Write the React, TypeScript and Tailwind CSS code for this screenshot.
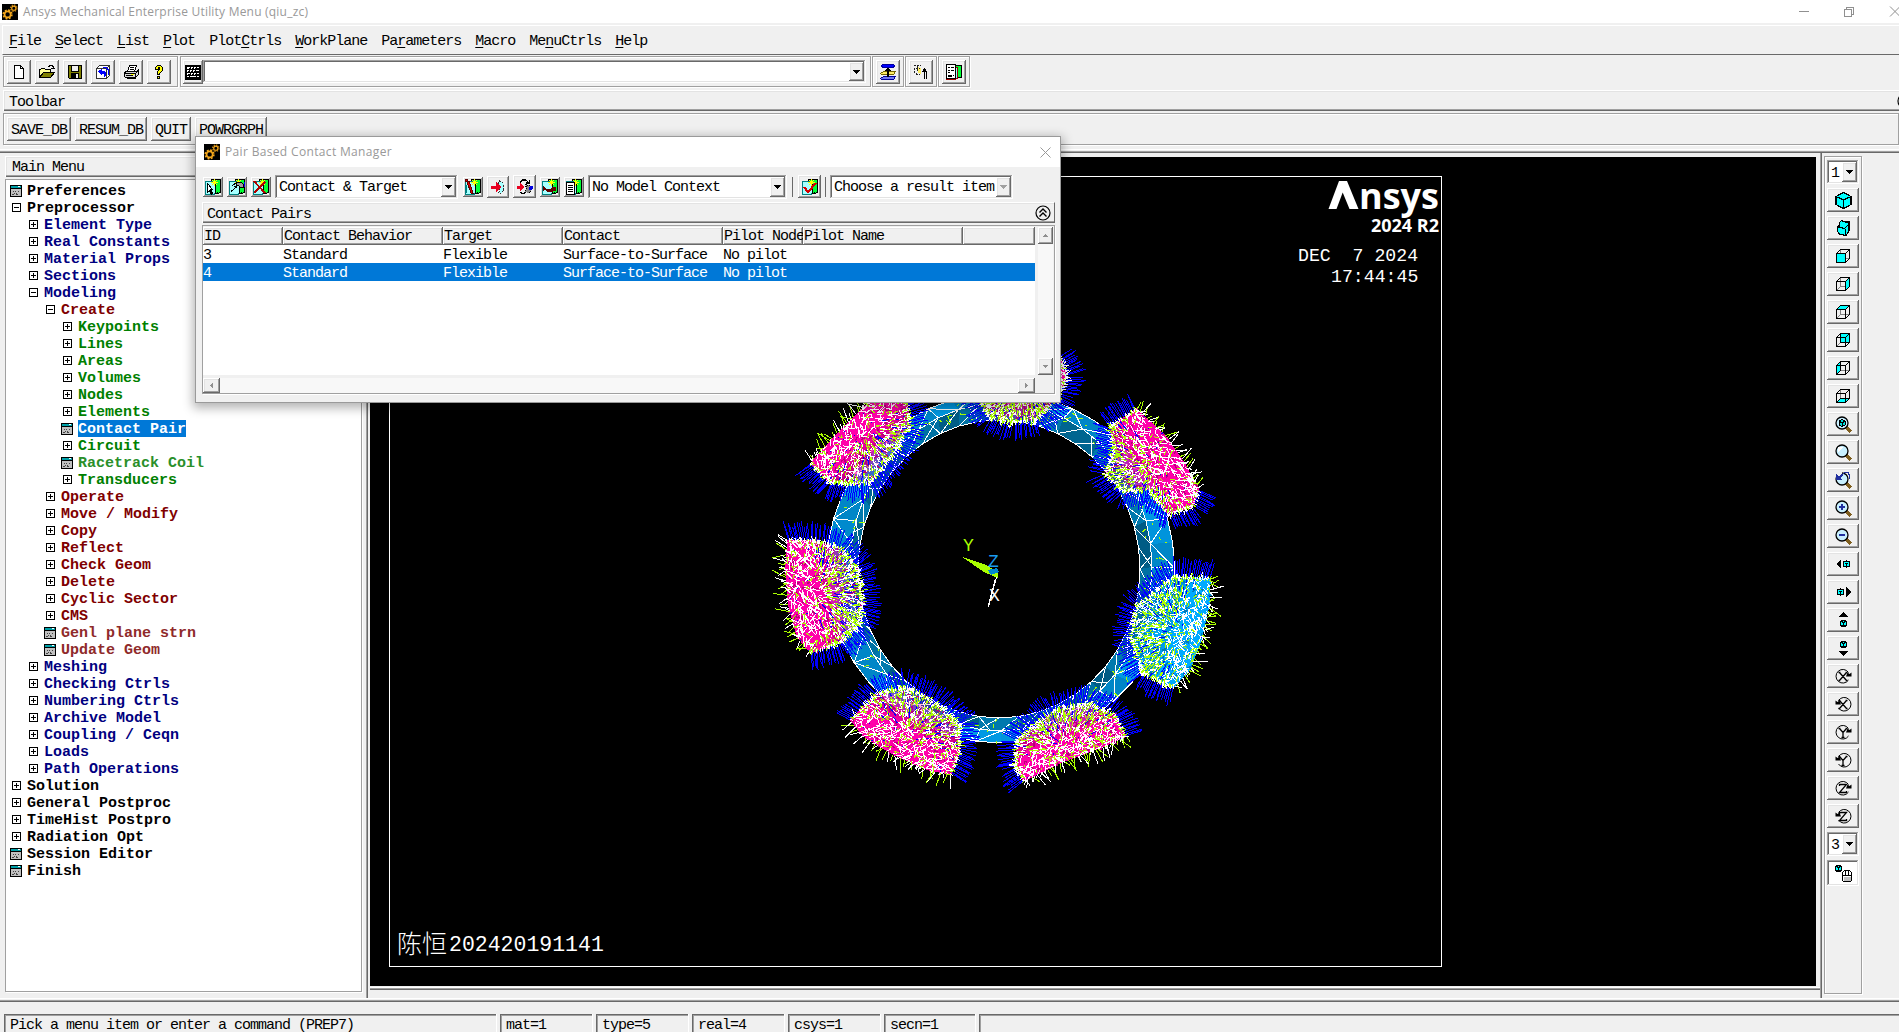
import React from "react";

const RAISED =
  "bg-[#f0f0f0] shadow-[inset_-1px_-1px_#696969,inset_1px_1px_#ffffff,inset_-2px_-2px_#a0a0a0,inset_2px_2px_#e3e3e3]";
const SUNKEN =
  "bg-white shadow-[inset_-1px_-1px_#ffffff,inset_1px_1px_#a0a0a0,inset_-2px_-2px_#e3e3e3,inset_2px_2px_#696969]";
const GROUP = "border border-[#a0a0a0] shadow-[1px_1px_#ffffff,inset_1px_1px_#ffffff]";
const BAR = "border-t border-l border-white shadow-[inset_0_-1px_#696969,inset_0_-2px_#a0a0a0,inset_1px_1px_#e3e3e3]";
const MONO =
  "block font-['Liberation_Mono','Noto_Sans_CJK_SC',monospace] text-[15px] tracking-[-1px] whitespace-pre leading-[18px]";

/* ---------- icons ---------- */

function Gears() {
  return (
    <svg width="16" height="16" viewBox="0 0 16 16" className="shrink-0">
      <rect width="16" height="16" fill="#000" />
      <circle cx="5.6" cy="10.4" r="4.3" fill="none" stroke="#f5a81c" strokeWidth="1.6" strokeDasharray="1.9 1.48" />
      <circle cx="5.6" cy="10.4" r="3" fill="none" stroke="#f5a81c" strokeWidth="1.6" />
      <circle cx="11.8" cy="4.2" r="3.2" fill="none" stroke="#b87d14" strokeWidth="1.3" strokeDasharray="1.4 1.1" />
      <circle cx="11.8" cy="4.2" r="2.1" fill="none" stroke="#f5a81c" strokeWidth="1.1" />
    </svg>
  );
}

function Ico({ children, size = 16 }: { children: React.ReactNode; size?: number }) {
  return (
    <svg width={size} height={size} viewBox={`0 0 ${size} ${size}`} shapeRendering="crispEdges" className="shrink-0" fill="none" stroke="#000">
      {children}
    </svg>
  );
}

const NewIcon = () => (
  <Ico>
    <path d="M3.5 1.5h6l3 3v10h-9z" fill="#fff" />
    <path d="M9.5 1.5v3h3" />
  </Ico>
);
const OpenIcon = () => (
  <Ico>
    <path d="M.5 13.5v-8h1l1-1h3l1 1h5v3" fill="#ffff99" />
    <path d="M.5 13.5l4-5h11l-4 5z" fill="#808000" />
    <path d="M9 2.5h1l1-1h2l1 1v2M12 4.5h4M13.5 5v-1" />
  </Ico>
);
const SaveIcon = () => (
  <Ico>
    <path d="M1.5 1.5h13v13h-12l-1-1z" fill="#808000" />
    <rect x="4.5" y="1.5" width="7" height="6" fill="#f0f0f0" />
    <rect x="4" y="9" width="8" height="5" fill="#000" stroke="none" />
    <rect x="9" y="10" width="2" height="4" fill="#f0f0f0" stroke="none" />
  </Ico>
);
const ResumeIcon = () => (
  <Ico>
    <path d="M1.5 4.5l3-3h10v10l-3 3h-10zM1.5 4.5h10v10M11.5 4.5l3-3" fill="#fff" stroke="#333" />
    <path d="M3 7.500l4-3v2h2.500l1.500 2v3l-2 2c.5-3 0-4-2-4v2z" fill="#0000ff" stroke="none" />
    <path d="M8 3.500h3l2 2v5" stroke="#00f" />
  </Ico>
);
const PrintIcon = () => (
  <Ico>
    <path d="M4.5 7.5l2-6h7l-2 6z" fill="#fff" />
    <path d="M7 3.5h4M6.5 5.5h4" />
    <path d="M1.5 8.5l2-1h10l2-2v5l-3 3h-10l-1-1z" fill="#d8d8d8" />
    <path d="M1.5 9.5h11l2-2M12.5 9v5M3 11.5h7" />
    <path d="M7.5 10.5h3" stroke="#ffff00" />
    <path d="M3.5 14.5h9" />
  </Ico>
);
const HelpIcon = () => (
  <Ico>
    <path d="M4.5 5.5v-2l2-2h3l2 2v3l-3 3v1h-2v-3l2-2v-2h-1v2z" fill="#ffff00" />
    <path d="M6.5 12.5h2v2h-2z" fill="#ffff00" />
  </Ico>
);
const KeyboardIcon = () => (
  <Ico>
    <rect x="0" y="1" width="16" height="15" fill="#000" stroke="none" />
    <path
      d="M2 3.500h3M6 3.500h2M9 3.500h2M12 3.500h2M2 6.500h2M5 6.500h2M8 6.500h2M11 6.500h3M2 9.500h3M6 9.500h2M9 9.500h2M12 9.500h2M2 12.500h2M5 12.500h6M12 12.500h2M2 4.500h2M6 4.500h1M9 4.500h1M2 7.500h1M5 7.500h1M8 7.500h1M2 10.500h1M6 10.500h1M9 10.500h1"
      stroke="#fff"
    />
  </Ico>
);
const RaiseIcon = () => (
  <Ico>
    <path d="M1.5 1.5l1-1h11l1 1-1 2h-11z" fill="#0000ff" stroke="#00009c" />
    <path d="M.5 9.5l3-2h12l-2 3h-12z" fill="#ffee66" stroke="#776600" />
    <path d="M.5 14.5l3-2h12l-2 3h-12z" fill="#6f78f0" stroke="#00009c" />
    <path d="M8 3l3 4h-2v6h-2v-6h-2z" fill="#000" stroke="none" />
  </Ico>
);
const PickIcon = () => (
  <Ico>
    <path d="M4 3l4 1v6l-3-1z" fill="#ffee66" stroke="none" />
    <path d="M1 1.500h7M4.500 2v2M1.500 4v4l2 2h3M3 4.500h4M4.500 5v2" stroke="#222" strokeDasharray="2 1" />
    <path d="M9 8l2.500-3L14 8M11.500 5v10M13.500 8v7M10 7.500h4" />
  </Ico>
);
const ContactIcon = () => (
  <Ico>
    <rect x="7.5" y="1.5" width="8" height="12" fill="#00ff33" />
    <path d="M7.5 3.5h4v11l-4 1h-7v-13h7z" fill="#9ff" stroke="#a00000" />
    <rect x=".5" y=".5" width="9" height="14" fill="#fff" />
    <path d="M2 3.5h2M5 3.5h3M2 6.5h2M5 6.5h3M2 8.5h2M2 11.5h4M2 12.5h4M7 11.5h1" />
  </Ico>
);

function PairIcon({ kind }: { kind: string }) {
  return (
    <Ico>
      <path d="M6.500 .5h9v12l-2 2h-3z" fill="#00ff33" />
      <path d="M.5 2.500h8l2 1v11l-2 1h-8z" fill="#a6ffff" stroke="#008080" />
      <path d="M10.500 4v11M12.500 13v2M15.500 1v13" />
      <path d="M9.500 0v7M6 3.500h7M7 1l5 5M12 1l-5 5" stroke="#ffff00" />
      {kind === "new" && <path d="M2.500 4.500v9l2-2 2 4 1-1-2-4h2z" fill="#fff" />}
      {kind === "edit" && (
        <>
          <path d="M7.500 3.500h5l2 2v3h-3l-2-2h-2z" fill="#a0a0a0" />
          <path d="M8 7.500l-6 5M3 7l4-3M4.500 7.500h3" />
          <path d="M15.500 3v5" stroke="#00f" />
        </>
      )}
      {kind === "delete" && <path d="M1 2l11 12M12 3L1 14" stroke="#b00000" strokeWidth="1.800" />}
      {kind === "view" && (
        <>
          <path d="M0 0h2v2H0zM2 3l2-1 4 12h-2z" fill="#e00000" stroke="#600000" />
          <path d="M1.500 6v8" stroke="#008080" />
        </>
      )}
      {kind === "swap" && (
        <path d="M1 12V7l1.500 1.500C5 11 8 11 10 9L8.500 7.500H14V13l-1.500-1.500C9 14.500 5 14 3 10.500z" fill="#600000" stroke="none" />
      )}
      {kind === "list" && (
        <>
          <rect x=".5" y="3.500" width="8" height="12" fill="#fff" />
          <path d="M2 6.500h5M2 8.500h5M2 10.500h5M2 12.500h5" />
        </>
      )}
      {kind === "check" && <path d="M2 8l4 5 8-9" stroke="#d80000" strokeWidth="2.200" />}
    </Ico>
  );
}
const NormalsIcon = () => (
  <Ico>
    <path d="M9.500 1.500l4 3v7l-3 3-2-1c2-3 2-5 0-8z" fill="#a6ffff" stroke="#333" strokeDasharray="2 1" />
    <path d="M1 6.500h5V3l5 5-5 5V9.500H1z" fill="#e80020" stroke="none" />
  </Ico>
);
const FlipIcon = () => (
  <Ico>
    <path d="M3 4l2-3h4l3 3M12.500 1v3h-4M3 13.500l3 1 3-1" strokeWidth="1.300" />
    <path d="M8.500 5.500l4 1 2 5-3 3-3-2 1-3z" fill="#8a8a8a" strokeDasharray="1 1" />
    <path d="M0 6.500h3V3.500L8 8l-5 4.500V9.500H0z" fill="#e80020" stroke="none" />
    <circle cx="14" cy="9" r="2" fill="#0000e0" stroke="none" />
  </Ico>
);

function Cube({ face }: { face: string }) {
  const c = "#00ffff";
  if (face === "iso")
    return (
      <Ico size={17}>
        <path d="M8.5 .5l7.5 4v8l-7.5 4-7.5-4v-8z" fill={c} strokeWidth="1.2" />
        <path d="M1 4.5l7.5 3.5L16 4.5M8.5 8v8" strokeWidth="1.2" />
      </Ico>
    );
  if (face === "oblique")
    return (
      <Ico size={17}>
        <path d="M4.500 4.500v-2l2-2 4 1.500 3.500 0v9l-3 4.500-7-1.500-1.500-3v-4z" fill={c} strokeWidth="1.200" />
        <path d="M2.500 7l7 1.500 4.500-4.500M10.500 9v6M4.500 4v3" strokeWidth="1.200" />
      </Ico>
    );
  return (
    <Ico size={14}>
      <path d="M4.5 0v9.500M4.500 9.500h9M4.500 9.500l-4 4" stroke="#808080" />
      {face === "front" && <rect x=".5" y="4.500" width="9" height="9" fill={c} />}
      {face === "right" && <path d="M9.500 4.500l4-4v9l-4 4z" fill={c} />}
      {face === "top" && <path d="M.5 4.500l4-4h9l-4 4z" fill={c} />}
      {face === "back" && <path d="M4.500.5h9v9h-9z" fill={c} />}
      {face === "left" && <path d="M.5 4.500l4-4v9l-4 4z" fill={c} />}
      {face === "bottom" && <path d="M.5 13.500l4-4h9l-4 4z" fill={c} />}
      <path d="M.5 4.500h9v9h-9zM.5 4.500l4-4h9v9l-4 4M9.500 4.500l4-4" />
    </Ico>
  );
}

function Magnifier({ mark }: { mark: string }) {
  return (
    <Ico size={17}>
      <path d="M11 11l5 5" stroke="#806020" strokeWidth="3.4" />
      <circle cx="7" cy="7" r="6" fill="#c8f0ff" strokeWidth="1.3" shapeRendering="auto" />
      {mark === "fit" && <path d="M4 5l3-1.500 3 1.500v4l-3 1.500-3-1.500zM4 5.500l3 1 3-1M7 6.500v4" fill="#00e0e0" />}
      {mark === "" && <path d="M3 3h5l-5 5z" fill="#fff" stroke="none" />}
      {mark === "back" && (
        <>
          <rect x="0" y="0" width="7" height="4" fill="#f0f0f0" stroke="none" />
          <path d="M1 2v6h6l-2-2 3-3-2-1-2 2z" fill="#2030a0" stroke="none" />
          <path d="M7 2.500l3-2h3l1 2v4" stroke="#2030a0" />
        </>
      )}
      {mark === "in" && <path d="M4 7h6M7 4v6" stroke="#2030a0" strokeWidth="2" />}
      {mark === "out" && <path d="M4 7h6" stroke="#2030a0" strokeWidth="2" />}
    </Ico>
  );
}

const MINI = "M.5 1.5l3-1 3 1v4l-3 1-3-1z";
function Pan({ dir }: { dir: string }) {
  const tri: Record<string, string> = {
    left: "M1 8l5-5v10z",
    right: "M16 8l-5-5v10z",
    up: "M8.500 0l5 5h-10z",
    down: "M8.500 16l5-5h-10z",
  };
  const at: Record<string, string> = {
    left: "translate(8 4.500)",
    right: "translate(2 4.500)",
    up: "translate(5 8)",
    down: "translate(5 1)",
  };
  return (
    <Ico size={17}>
      <path d={tri[dir]} fill="#000" stroke="none" />
      <g transform={at[dir]}>
        <path d={MINI} fill="#00ffff" strokeWidth="1.300" />
        <path d="M2 2.500h3M3.500 3v3" />
      </g>
    </Ico>
  );
}

function Rotate({ axis, back }: { axis: string; back?: boolean }) {
  const glyph: Record<string, string> = {
    X: "M4.500 4.500l7 8M11.500 4.500l-7 8M3.500 12.500h2M10.500 12.500h2M3.500 4.500h2M10.500 4.500h2",
    Y: "M4.500 4.500l3.500 4 3.500-4M8 8.500v5M3.500 4.500h2M10.500 4.500h2M6.500 13.500h3",
    Z: "M4.500 6v-1.500h7l-7 8h7v-1.500",
  };
  return (
    <svg width="17" height="17" viewBox="0 0 17 17" fill="none" stroke="#000" className="shrink-0">
      <g transform={back ? "translate(17 0) scale(-1 1)" : undefined}>
        <path d="M13.500 12a6.800 6.800 0 1 1 0-7.500" />
        <path d="M11 8.500h5.500V4.500l-2 1.500-2-1.500z" fill="#000" stroke="none" />
      </g>
      <path d={glyph[axis]} strokeWidth="1.300" />
    </svg>
  );
}

const MouseIcon = () => (
  <Ico size={17}>
    <path d={MINI} fill="#00ffff" strokeWidth="1.300" />
    <path d="M2 2.500h3M3.500 3v3" />
    <path d="M7.500 7.500l2-2h5l2 2v8l-1 1h-7l-1-1z" fill="#fff" />
    <path d="M7.500 10.500h9M10.500 5.500v5M13.500 5.500v5" />
    <path d="M8.500 11.500h7v4h-7z" fill="#c0c0c0" stroke="none" />
  </Ico>
);

const Down = ({ dim }: { dim?: boolean }) => (
  <svg width="7" height="4" viewBox="0 0 7 4" shapeRendering="crispEdges">
    <path d="M0 0h7v1h-1v1h-1v1h-1v1h-1v-1h-1v-1h-1v-1h-1z" fill={dim ? "#a0a0a0" : "#000"} />
  </svg>
);

const Collapse = () => (
  <svg width="16" height="16" viewBox="0 0 16 16" fill="none" stroke="#000" className="shrink-0">
    <circle cx="8" cy="8" r="7" strokeWidth="1.200" />
    <path d="M4.500 7.500L8 4l3.500 3.500M4.500 11.500L8 8l3.500 3.500" strokeWidth="1.400" />
  </svg>
);

const FormIcon = () => (
  <svg width="12" height="12" viewBox="0 0 12 12" shapeRendering="crispEdges" className="shrink-0">
    <rect width="12" height="12" fill="#000" />
    <rect x="1" y="1" width="10" height="2" fill="#00a0a8" />
    <rect x="8" y="1" width="2" height="1" fill="#fff" />
    <rect x="1" y="4" width="10" height="7" fill="#c0c0c0" />
    <path d="M3 6.500h1M5 6.500h1M8 6.500h1M4 8.500h1M6 8.500h1M2 9.500h2M6 9.500h2" stroke="#444" />
  </svg>
);

const Toggle = ({ open }: { open: boolean }) => (
  <svg width="9" height="9" viewBox="0 0 9 9" shapeRendering="crispEdges" className="shrink-0" stroke="#000" fill="#fff">
    <rect x=".5" y=".5" width="8" height="8" />
    <path d={open ? "M2 4.500h5" : "M2 4.500h5M4.500 2v5"} />
  </svg>
);

/* ---------- tree ---------- */

type Node = [level: number, kind: "+" | "-" | "f", label: string];
const TREE: Node[] = [
  [0, "f", "Preferences"],
  [0, "-", "Preprocessor"],
  [1, "+", "Element Type"],
  [1, "+", "Real Constants"],
  [1, "+", "Material Props"],
  [1, "+", "Sections"],
  [1, "-", "Modeling"],
  [2, "-", "Create"],
  [3, "+", "Keypoints"],
  [3, "+", "Lines"],
  [3, "+", "Areas"],
  [3, "+", "Volumes"],
  [3, "+", "Nodes"],
  [3, "+", "Elements"],
  [3, "f", "Contact Pair"],
  [3, "+", "Circuit"],
  [3, "f", "Racetrack Coil"],
  [3, "+", "Transducers"],
  [2, "+", "Operate"],
  [2, "+", "Move / Modify"],
  [2, "+", "Copy"],
  [2, "+", "Reflect"],
  [2, "+", "Check Geom"],
  [2, "+", "Delete"],
  [2, "+", "Cyclic Sector"],
  [2, "+", "CMS"],
  [2, "f", "Genl plane strn"],
  [2, "f", "Update Geom"],
  [1, "+", "Meshing"],
  [1, "+", "Checking Ctrls"],
  [1, "+", "Numbering Ctrls"],
  [1, "+", "Archive Model"],
  [1, "+", "Coupling / Ceqn"],
  [1, "+", "Loads"],
  [1, "+", "Path Operations"],
  [0, "+", "Solution"],
  [0, "+", "General Postproc"],
  [0, "+", "TimeHist Postpro"],
  [0, "+", "Radiation Opt"],
  [0, "f", "Session Editor"],
  [0, "f", "Finish"],
];
const INDENT = ["pl-[4px]", "pl-[21px]", "pl-[38px]", "pl-[55px]"];
const TONE = ["text-black", "text-[#000080]", "text-[#800000]", "text-[#008000]"];
const LEAF_TONE = ["text-black", "text-[#000080]", "text-[#8f2a2a]", "text-[#2a8f2a]"];

function Tree() {
  return (
    <div className="mt-[2px] ml-[5px] flex h-[813px] w-[357px] flex-col border border-[#a0a0a0] bg-white pt-[2px] shadow-[1px_1px_#ffffff]">
      {TREE.map(([level, kind, label]) => {
        const selected = label === "Contact Pair";
        const tone = selected ? "bg-[#0078d7] text-white" : kind === "f" ? LEAF_TONE[level] : TONE[level];
        return (
          <div key={label} className={`flex h-[17px] items-center ${INDENT[level]}`}>
            <span className="flex w-[17px] shrink-0">
              {kind === "f" ? <FormIcon /> : <span className="ml-[2px]"><Toggle open={kind === "-"} /></span>}
            </span>
            <span className={`h-[17px] font-['Liberation_Mono',monospace] text-[15px] leading-[19px] font-bold whitespace-pre ${tone}`}>{label}</span>
          </div>
        );
      })}
    </div>
  );
}

/* ---------- model plot ---------- */

type P = [number, number];
function makeRng(seed: number) {
  let s = seed;
  return () => {
    s = (s * 1664525 + 1013904223) % 4294967296;
    return s / 4294967296;
  };
}
const at = (x: number, y: number): P => [760 + x / 3, 340 + y / 3];
const C: P = [1000, 569];

const PADS: { pts: P[]; fill: string }[] = [
  { fill: "#ff00aa", pts: [at(325, 187), at(240, 270), at(150, 370), at(210, 430), at(330, 432), at(400, 345), at(450, 260), at(440, 150), at(400, 110)] },
  { fill: "#ff00aa", pts: [at(82, 600), at(75, 690), at(85, 800), at(110, 890), at(150, 940), at(240, 910), at(300, 850), at(308, 760), at(290, 680), at(240, 620), at(150, 600)] },
  { fill: "#ff00aa", pts: [at(270, 1140), at(350, 1060), at(440, 1040), at(530, 1090), at(600, 1150), at(600, 1230), at(575, 1305), at(500, 1290), at(400, 1245), at(310, 1190)] },
  { fill: "#ff00aa", pts: [at(770, 1200), at(810, 1165), at(880, 1110), at(980, 1090), at(1060, 1120), at(1100, 1190), at(1020, 1225), at(900, 1270), at(790, 1325), at(765, 1280)] },
  { fill: "#00aaff", pts: [at(1240, 708), at(1352, 715), at(1350, 790), at(1325, 900), at(1290, 990), at(1240, 1045), at(1150, 1000), at(1110, 890), at(1130, 800)] },
  { fill: "#ff00aa", pts: [at(1050, 260), at(1130, 205), at(1220, 290), at(1275, 370), at(1318, 450), at(1300, 500), at(1225, 525), at(1165, 450), at(1090, 455), at(1030, 400), at(1060, 340)] },
  { fill: "#ff00aa", pts: [at(640, 150), at(640, 30), at(900, 50), at(922, 110), at(900, 165), at(830, 240), at(760, 250), at(690, 235)] },
];

function inside(p: P, poly: P[]) {
  let hit = false;
  for (let i = 0, j = poly.length - 1; i < poly.length; j = i++) {
    const [xi, yi] = poly[i];
    const [xj, yj] = poly[j];
    if (yi > p[1] !== yj > p[1] && p[0] < ((xj - xi) * (p[1] - yi)) / (yj - yi) + xi) hit = !hit;
  }
  return hit;
}
const seg = (x: number, y: number, a: number, l: number) =>
  `M${x.toFixed(1)} ${y.toFixed(1)}l${(Math.cos(a) * l).toFixed(1)} ${(Math.sin(a) * l).toFixed(1)}`;

function Pad({ pts, fill, seed }: { pts: P[]; fill: string; seed: number }) {
  const r = makeRng(seed);
  const cx = pts.reduce((s, p) => s + p[0], 0) / pts.length;
  const cy = pts.reduce((s, p) => s + p[1], 0) / pts.length;
  const d = Math.hypot(cx - C[0], cy - C[1]);
  const ux = (cx - C[0]) / d;
  const uy = (cy - C[1]) / d;
  const base = Math.atan2(uy, ux);
  let white = "", green = "", blue = "", fringe = "", dark = "", spikes = "";
  const xs = pts.map((p) => p[0]);
  const ys = pts.map((p) => p[1]);
  const x0 = Math.min(...xs), x1 = Math.max(...xs), y0 = Math.min(...ys), y1 = Math.max(...ys);
  for (let i = 0; i < 2600; i++) {
    const x = x0 + r() * (x1 - x0);
    const y = y0 + r() * (y1 - y0);
    if (!inside([x, y], pts)) continue;
    const dep = (x - cx) * ux + (y - cy) * uy;
    const t = r();
    const fan = Math.atan2(y - cy - uy * 8, x - cx - ux * 8);
    if (dep > 1 + (r() - 0.5) * 14) {
      if (t < 0.27) white += seg(x, y, base + [0.5, 1.57, 0.9, 2.35][Math.floor(r() * 4)] + (r() - 0.5) * 0.2, 4 + r() * 5);
      else if (t < 0.34) green += seg(x, y, r() * 6.28, 2 + r() * 4);
      else if (t < 0.37) blue += seg(x, y, fan, 1 + r());
      else if (t < 0.43) dark += seg(x, y, r() * 6.28, 2 + r() * 3);
    } else {
      if (t < 0.38) white += seg(x, y, r() < 0.5 ? fan : r() * 6.28, 2 + r() * 4);
      else if (t < 0.64) green += seg(x, y, fan + (r() - 0.5), 2 + r() * 4);
      else if (t < 0.71) blue += seg(x, y, fan + (r() - 0.5) * 0.3, 4 + r() * 9);
      else if (t < 0.82) dark += seg(x, y, r() * 6.28, 3 + r() * 3);
    }
  }
  for (let i = 0; i < pts.length; i++) {
    const a = pts[i];
    const b = pts[(i + 1) % pts.length];
    const len = Math.hypot(b[0] - a[0], b[1] - a[1]);
    let nx = (b[1] - a[1]) / len;
    let ny = -(b[0] - a[0]) / len;
    const mx = (a[0] + b[0]) / 2;
    const my = (a[1] + b[1]) / 2;
    if (inside([mx + nx * 2, my + ny * 2], pts)) {
      nx = -nx;
      ny = -ny;
    }
    const outer = nx * ux + ny * uy > 0.72;
    const n = Math.round(len / (outer ? 3.4 : 1.8));
    for (let k = 0; k < n; k++) {
      const f = (k + r() * 0.6) / n;
      const x = a[0] + (b[0] - a[0]) * f;
      const y = a[1] + (b[1] - a[1]) * f;
      const rad = Math.atan2(y - cy, x - cx);
      const nor = Math.atan2(ny, nx);
      const ang = nor + Math.atan2(Math.sin(rad - nor), Math.cos(rad - nor)) * 0.5;
      if (outer) {
        const s = seg(x, y, nor + (r() - 0.5) * 1.3, 4 + r() * 11);
        if (r() < 0.55) spikes += s;
        else fringe += s;
      } else {
        blue += seg(x, y, ang + (r() - 0.5) * 0.12, 13 + r() * 7);
        if (r() < 0.75) fringe += seg(x - nx * 2, y - ny * 2, ang + (r() - 0.5) * 0.7, 2 + r() * 3);
        if (r() < 0.6) spikes += seg(x - nx * 3, y - ny * 3, ang + (r() - 0.5) * 0.9, 2 + r() * 4);
      }
    }
  }
  const outline = "M" + pts.map((p) => p.join(" ")).join("L") + "Z";
  const id = `pad${seed}`;
  return (
    <g fill="none" strokeWidth="1">
      <linearGradient
        id={id}
        gradientUnits="userSpaceOnUse"
        x1={cx - ux * 30}
        y1={cy - uy * 30}
        x2={cx}
        y2={cy}
      >
        <stop offset="0" stopColor={fill} stopOpacity="0.2" />
        <stop offset="0.5" stopColor={fill} stopOpacity="0.75" />
        <stop offset="1" stopColor={fill} />
      </linearGradient>
      <path d={outline} fill={`url(#${id})`} stroke="none" />
      <path d={dark} stroke={fill === "#ff00aa" ? "#b80078" : "#0077b8"} strokeWidth="1.500" />
      <path d={blue} stroke="#0000ff" />
      <path d={white} stroke="#ffffff" />
      <path d={green} stroke="#aaff00" />
      <path d={spikes} stroke="#aaff00" />
      <path d={fringe} stroke="#ffffff" />
    </g>
  );
}

function Ring() {
  const r = makeRng(77);
  const N = 44;
  const tiles: { d: string; fill: string }[] = [];
  let mesh = "";
  let fleck = "";
  const el = (a: number, cx: number, cy: number, rx: number, ry: number): P => [cx + Math.cos(a) * rx, cy + Math.sin(a) * ry];
  const inner = (a: number) => el(a, 999, 569, 141, 149);
  const mid = (a: number) => el(a, 1001, 567, 151, 164);
  const outer = (a: number) => el(a, 1000.5, 568, 174, 175);
  const j = (p: P) => `${p[0].toFixed(1)} ${p[1].toFixed(1)}`;
  for (let i = 0; i < N; i++) {
    const a = (i / N) * Math.PI * 2;
    const b = ((i + 1) / N) * Math.PI * 2;
    const m = (a + b) / 2;
    const dark = ["#006590", "#0071a3", "#005c85", "#0079ad"];
    const lite = ["#0094dc", "#008acd", "#0099e3", "#0086c7"];
    tiles.push({ d: `M${j(inner(a))}L${j(mid(a))}L${j(mid(b))}L${j(inner(b))}Z`, fill: dark[Math.floor(r() * 4)] });
    tiles.push({ d: `M${j(mid(a))}L${j(outer(a))}L${j(outer(b))}L${j(mid(b))}Z`, fill: lite[Math.floor(r() * 4)] });
    mesh += `M${j(inner(a))}L${j(mid(b))}M${j(inner(a))}L${j(inner(b))}M${j(mid(a))}L${j(mid(b))}M${j(outer(a))}L${j(outer(b))}`;
    if (i % 2) mesh += `M${j(mid(a))}L${j(outer(b))}M${j(inner(b))}L${j(mid(m))}`;
    else mesh += `M${j(outer(a))}L${j(mid(b))}M${j(mid(a))}L${j(outer(a))}`;
    for (let k = 0; k < 4; k++) {
      const t = a + r() * (b - a);
      const p = el(t, 1000, 568, 143 + r() * 26, 150 + r() * 24);
      fleck += seg(p[0], p[1], r() * 6.28, 1 + r() * 5);
    }
  }
  return (
    <g>
      {tiles.map((t, i) => (
        <path key={i} d={t.d} fill={t.fill} />
      ))}
      <path d={mesh} stroke="#fff" fill="none" />
      <path d={fleck} stroke="#aaff00" fill="none" />
    </g>
  );
}

function Plot() {
  const mono = "'Liberation Mono','Noto Sans CJK SC',monospace";
  return (
    <svg width="1446" height="829" viewBox="370 157 1446 829" className="block bg-black">
      <rect x="389.5" y="176.5" width="1052" height="790" fill="none" stroke="#fff" shapeRendering="crispEdges" />
      <g shapeRendering="crispEdges">
        <Ring />
        {PADS.map((p, i) => (
          <Pad key={i} pts={p.pts} fill={p.fill} seed={i * 991 + 17} />
        ))}
        <path d="M962 557l24 8 12 7v6l-14-6z" fill="#aaff00" />
        <path d="M988 570l9-2 2 4-8 3z" fill="#0088cc" />
        <path d="M996.500 577l-8 30M995 580l-7 27" stroke="#fff" />
      </g>
      <g fontFamily={mono} fontSize="18">
        <text x="963" y="551" fill="#aaff00">Y</text>
        <text x="988" y="567" fill="#1a9cf0">Z</text>
        <text x="989" y="601" fill="#fff">X</text>
        <text x="1298" y="261" fill="#fff" fontSize="18.200" style={{ whiteSpace: "pre" }}>DEC  7 2024</text>
        <text x="1331" y="282" fill="#fff" fontSize="18.200">17:44:45</text>
      </g>
      <g fill="#fff" fontFamily="'Open Sans','Noto Sans',sans-serif" fontWeight="700">
        <path d="M1328.500 209l10.500-28h8l-10.500 28zM1347 181l11.500 28h-9l-7-17z" />
        <text x="1359" y="209" fontSize="35" textLength="80" lengthAdjust="spacingAndGlyphs">nsys</text>
        <text x="1371" y="232" fontSize="18" textLength="68" lengthAdjust="spacingAndGlyphs">2024 R2</text>
      </g>
      <text x="397" y="953" fill="#fff" fontFamily="'Noto Sans CJK SC',sans-serif" fontSize="25" fontWeight="300">陈恒</text>
      <text x="449" y="951" fill="#fff" fontFamily={mono} fontSize="21.500">202420191141</text>
    </svg>
  );
}

/* ---------- controls ---------- */

function Combo({ text, className, dim }: { text: string; className: string; dim?: boolean }) {
  return (
    <div className={`flex items-center justify-between overflow-hidden p-[2px] ${SUNKEN} ${className}`}>
      <span className={`${MONO} min-w-0 flex-1 overflow-hidden pt-[3px] pl-[2px]`}>{text}</span>
      <span className={`flex h-full w-[15px] shrink-0 items-center justify-center ${RAISED}`}>
        <Down dim={dim} />
      </span>
    </div>
  );
}

function Btn({ children, className = "size-[24px]" }: { children: React.ReactNode; className?: string }) {
  return <button className={`flex shrink-0 items-center justify-center ${RAISED} ${className}`}>{children}</button>;
}

const MENUS: [string, string, string][] = [
  ["", "F", "ile"],
  ["", "S", "elect"],
  ["", "L", "ist"],
  ["", "P", "lot"],
  ["Plot", "C", "trls"],
  ["", "W", "orkPlane"],
  ["Pa", "r", "ameters"],
  ["", "M", "acro"],
  ["Me", "n", "uCtrls"],
  ["", "H", "elp"],
];

const VIEW_ICONS: React.ReactNode[] = [
  <Cube face="iso" />,
  <Cube face="oblique" />,
  <Cube face="front" />,
  <Cube face="right" />,
  <Cube face="top" />,
  <Cube face="back" />,
  <Cube face="left" />,
  <Cube face="bottom" />,
  <Magnifier mark="fit" />,
  <Magnifier mark="" />,
  <Magnifier mark="back" />,
  <Magnifier mark="in" />,
  <Magnifier mark="out" />,
  <Pan dir="left" />,
  <Pan dir="right" />,
  <Pan dir="up" />,
  <Pan dir="down" />,
  <Rotate axis="X" />,
  <Rotate axis="X" back />,
  <Rotate axis="Y" />,
  <Rotate axis="Y" back />,
  <Rotate axis="Z" />,
  <Rotate axis="Z" back />,
];

function ViewBar() {
  return (
    <div className={`mt-[3px] ml-px flex h-[838px] w-[38px] flex-col gap-[4px] pt-[3px] pl-[2px] ${GROUP}`}>
      <Combo text="1" className="h-[24px] w-[32px]" />
      {VIEW_ICONS.map((icon, i) => (
        <Btn key={i} className="h-[24px] w-[32px]">{icon}</Btn>
      ))}
      <Combo text="3" className="h-[24px] w-[32px]" />
      <div className={`flex h-[26px] w-[32px] items-center justify-center ${SUNKEN}`}>
        <MouseIcon />
      </div>
    </div>
  );
}

/* ---------- contact manager ---------- */

const COLS: [string, string][] = [
  ["ID", "w-[80px]"],
  ["Contact Behavior", "w-[160px]"],
  ["Target", "w-[120px]"],
  ["Contact", "w-[160px]"],
  ["Pilot Node", "w-[80px]"],
  ["Pilot Name", "w-[160px]"],
  ["", "w-[72px]"],
];
const ROWS = [
  ["3", "Standard", "Flexible", "Surface-to-Surface", "No pilot", "", ""],
  ["4", "Standard", "Flexible", "Surface-to-Surface", "No pilot", "", ""],
];

const Arrow = ({ turn }: { turn: string }) => (
  <span className={turn}>
    <svg width="5" height="3" viewBox="0 0 5 3" className="block" shapeRendering="crispEdges">
      <path d="M0 0h5L2.500 3z" fill="#909090" />
    </svg>
  </span>
);

function ContactManager() {
  return (
    <div className="absolute top-[136px] left-[195px] flex h-[267px] w-[866px] flex-col border border-[#9a9a9a] bg-[#f0f0f0] shadow-[0_3px_10px_2px_rgba(0,0,0,0.3)]">
      <div className="flex h-[30px] shrink-0 items-center bg-white pl-[8px]">
        <Gears />
        <span className="ml-[5px] flex-1 font-['Open_Sans',sans-serif] text-[12px] tracking-[0.34px] text-[#999999]">Pair Based Contact Manager</span>
        <svg width="11" height="11" viewBox="0 0 11 11" className="mr-[9px]" stroke="#999">
          <path d="M.5.5l10 10M10.500.5l-10 10" />
        </svg>
      </div>
      <div className="flex h-[35px] shrink-0 items-center pt-[6px] pb-[2px] pl-[7px]">
        <div className="flex gap-[4px]">
          <Btn className="size-[20px]"><PairIcon kind="new" /></Btn>
          <Btn className="size-[20px]"><PairIcon kind="edit" /></Btn>
          <Btn className="size-[20px]"><PairIcon kind="delete" /></Btn>
        </div>
        <Combo text="Contact & Target" className="ml-[4px] h-[24px] w-[183px]" />
        <div className="ml-[5px] flex items-center gap-[4px]">
          <Btn className="size-[20px]"><PairIcon kind="view" /></Btn>
          <Btn className="size-[22px]"><NormalsIcon /></Btn>
          <Btn className="size-[23px]"><FlipIcon /></Btn>
          <Btn className="size-[20px]"><PairIcon kind="swap" /></Btn>
          <Btn className="size-[20px]"><PairIcon kind="list" /></Btn>
        </div>
        <Combo text="No Model Context" className="ml-[4px] h-[24px] w-[199px]" />
        <div className="ml-[5px] h-[20px] w-px bg-[#696969]" />
        <Btn className="ml-[5px] size-[23px]"><PairIcon kind="check" /></Btn>
        <div className="ml-[4px] h-[20px] w-px bg-[#696969]" />
        <Combo text="Choose a result item" className="ml-[4px] h-[24px] w-[183px]" dim />
      </div>
      <div className={`ml-[6px] flex h-[21px] w-[853px] shrink-0 items-center justify-between border-r border-r-[#696969] pr-[3px] pl-[4px] ${BAR}`}>
        <span className={`${MONO} pt-[3px]`}>Contact Pairs</span>
        <Collapse />
      </div>
      <div className="mt-[2px] ml-[6px] flex h-[169px] w-[853px] border border-[#a0a0a0] shadow-[1px_1px_#ffffff]">
        <div className="flex w-[832px] flex-col">
          <div className="mt-px flex h-[18px]">
            {COLS.map(([name, w], i) => (
              <div key={i} className={`h-[18px] shrink-0 overflow-hidden pl-px ${w} ${RAISED}`}>
                <span className={`${MONO} pt-px`}>{name}</span>
              </div>
            ))}
          </div>
          <div className="h-[130px] bg-white">
            {ROWS.map((row, i) => (
              <div key={i} className={`flex h-[18px] ${i === 1 ? "bg-[#0078d7] text-white" : ""}`}>
                {row.map((cell, c) => (
                  <span key={c} className={`${MONO} ${COLS[c][1]} shrink-0 pt-[2px]`}>{cell}</span>
                ))}
              </div>
            ))}
          </div>
          <div className="mt-[3px] flex h-[15px] justify-between bg-[#f8f8f8]">
            <Btn className="h-[15px] w-[17px]"><Arrow turn="rotate-90" /></Btn>
            <Btn className="h-[15px] w-[17px]"><Arrow turn="-rotate-90" /></Btn>
          </div>
        </div>
        <div className="mt-px ml-[3px] flex h-[148px] w-[15px] flex-col justify-between bg-[#f8f8f8]">
          <Btn className="h-[17px] w-[15px]"><Arrow turn="rotate-180" /></Btn>
          <Btn className="h-[17px] w-[15px]"><Arrow turn="rotate-0" /></Btn>
        </div>
      </div>
    </div>
  );
}

/* ---------- page ---------- */

const STATUS: [string, string][] = [
  ["Pick a menu item or enter a command (PREP7)", "w-[492px]"],
  ["mat=1", "w-[92px]"],
  ["type=5", "w-[92px]"],
  ["real=4", "w-[92px]"],
  ["csys=1", "w-[92px]"],
  ["secn=1", "w-[91px]"],
  ["", "w-[940px]"],
];

export default function App() {
  return (
    <div className="relative flex h-[1032px] w-[1899px] flex-col overflow-hidden bg-[#f0f0f0] text-black">
      <header className="flex h-[23px] shrink-0 items-center bg-white pl-[2px]">
        <Gears />
        <span className="ml-[5px] flex-1 font-['Open_Sans',sans-serif] text-[12px] tracking-[0.21px] text-[#999999]">
          Ansys Mechanical Enterprise Utility Menu (qiu_zc)
        </span>
        <svg width="100" height="12" viewBox="0 0 100 12" fill="none" stroke="#909090" shapeRendering="crispEdges">
          <path d="M0 5.500h10M45.500 3.500h7v7h-7zM47.500 3v-2h7v7h-2" />
          <path d="M91 .5l10 10M101 .5l-10 10" shapeRendering="auto" />
        </svg>
      </header>

      <nav className="mt-[2px] ml-[2px] flex h-[30px] shrink-0 items-center gap-[14px] border-t border-b border-l border-t-white border-b-[#696969] border-l-white pl-[6px]">
        {MENUS.map(([a, b, c]) => (
          <span key={a + b + c} className={`${MONO} pt-[4px]`}>
            {a}
            <u className="decoration-1 underline-offset-2">{b}</u>
            {c}
          </span>
        ))}
      </nav>

      <div className="mt-px ml-[3px] flex h-[31px] shrink-0">
        <div className={`flex w-[175px] gap-[4px] pt-[3px] pl-[3px] ${GROUP}`}>
          <Btn><NewIcon /></Btn>
          <Btn><OpenIcon /></Btn>
          <Btn><SaveIcon /></Btn>
          <Btn><ResumeIcon /></Btn>
          <Btn><PrintIcon /></Btn>
          <Btn><HelpIcon /></Btn>
        </div>
        <div className={`ml-[2px] flex w-[691px] pt-[3px] pl-[2px] ${GROUP}`}>
          <Btn className="h-[24px] w-[20px]"><KeyboardIcon /></Btn>
          <Combo text="" className="h-[23px] w-[663px]" />
        </div>
        {[<RaiseIcon />, <PickIcon />, <ContactIcon />].map((icon, i) => (
          <div key={i} className={`ml-px flex w-[32px] pt-[3px] pl-[3px] ${GROUP}`}>
            <Btn>{icon}</Btn>
          </div>
        ))}
      </div>

      <div className={`mt-[3px] ml-[3px] flex h-[21px] shrink-0 items-center pl-[5px] ${BAR}`}>
        <span className={`${MONO} flex-1 pt-[3px]`}>Toolbar</span>
        <span className="-mr-[14px]"><Collapse /></span>
      </div>

      <div className={`mt-[2px] ml-[3px] flex h-[32px] shrink-0 gap-[4px] pt-[3px] pl-[3px] ${GROUP}`}>
        {["SAVE_DB", "RESUM_DB", "QUIT", "POWRGRPH"].map((t) => (
          <Btn key={t} className="h-[24px] px-[4px]">
            <span className={`${MONO} pt-[3px]`}>{t}</span>
          </Btn>
        ))}
      </div>

      <div className="mt-[4px] h-[4px] shrink-0 border-t border-t-white border-b border-b-[#696969] shadow-[inset_0_-1px_#a0a0a0]" />

      <main className="flex h-[845px] shrink-0">
        <aside className="w-[366px]">
          <div className={`mt-[3px] ml-[5px] flex h-[21px] items-center pl-[6px] ${BAR}`}>
            <span className={`${MONO} pt-[2px]`}>Main Menu</span>
          </div>
          <Tree />
        </aside>
        <div className="w-[4px] border-l border-[#a0a0a0] shadow-[inset_1px_0_#696969]" />
        <section className="w-[1450px] pt-[4px]">
          <div className="w-[1446px]"><Plot /></div>
          <div className="mt-px h-[3px] w-[1450px] border-t border-b border-t-white border-b-[#696969] shadow-[inset_0_-1px_#a0a0a0]" />
        </section>
        <div className="w-[3px] border-l border-[#a0a0a0] shadow-[inset_1px_0_#696969]" />
        <ViewBar />
      </main>

      <div className="h-[4px] shrink-0 border-t border-b border-t-white border-b-[#696969] shadow-[inset_0_-1px_#a0a0a0]" />

      <footer className="mt-[12px] ml-[4px] flex shrink-0 gap-[4px]">
        {STATUS.map(([t, w], i) => (
          <div key={i} className={`h-[18px] shrink-0 border-t border-l border-[#696969] pl-[5px] shadow-[1px_0_#ffffff,inset_1px_1px_#a0a0a0] ${w}`}>
            <span className={`${MONO} pt-[2px]`}>{t}</span>
          </div>
        ))}
      </footer>

      <ContactManager />
    </div>
  );
}
